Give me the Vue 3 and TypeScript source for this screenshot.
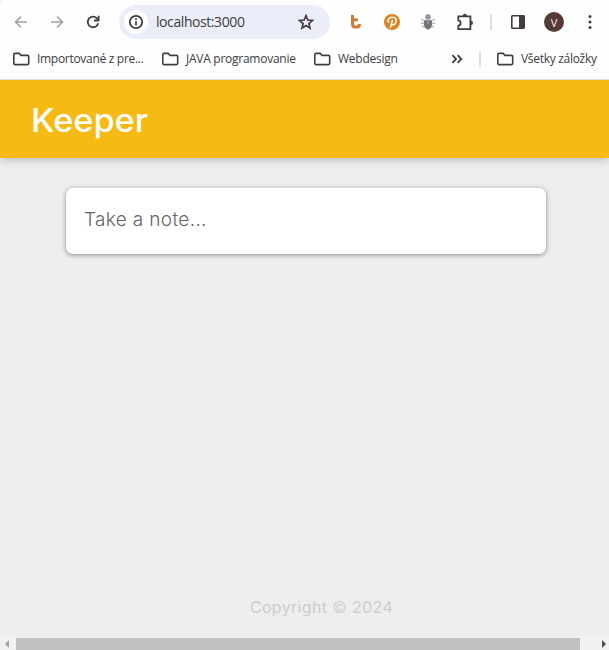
<script setup lang="ts">
import { ref } from 'vue'

const address = ref('localhost:3000')
const bookmarks: { label: string; cls: string }[] = [
  { label: 'Importované z pre...', cls: 'imported' },
  { label: 'JAVA programovanie', cls: 'java' },
  { label: 'Webdesign', cls: 'web' },
]
const note = ref('')
const year = 2024
</script>

<template>
  <div class="window">
    <div class="toolbar">
      <svg class="ic back" viewBox="0 0 16 16"><path d="M14 8H3M8 2.5 2.5 8 8 13.5" /></svg>
      <svg class="ic forward" viewBox="0 0 16 16"><path d="M2 8h11M8 2.5 13.5 8 8 13.5" /></svg>
      <svg class="ic reload" viewBox="0 0 16 16">
        <path d="M13.2 9.2A5.3 5.3 0 1 1 11.9 4.3L13.4 6" /><path d="M13.6 1.8v4.7H9" />
      </svg>
      <div class="omnibox">
        <span class="site-info">
          <svg viewBox="0 0 16 16"><circle cx="8" cy="8" r="6.2" /><path d="M8 7.2v4M8 4.3v1.7" /></svg>
        </span>
        <span class="address">{{ address }}</span>
        <svg class="star" viewBox="0 0 18 18"><path d="m9 2.7 1.8 4.3 4.7.4-3.6 3.1 1.1 4.6L9 12.6l-4 2.5 1.1-4.6-3.6-3.1 4.7-.4z" /></svg>
      </div>
      <svg class="ext tee" viewBox="0 0 16 16"><path d="M5.5 1v9c0 2.2.8 3 2.7 3h1.4c1.9 0 2.9-.9 2.9-3M4 5.8h6.8" /></svg>
      <svg class="ext pin" viewBox="0 0 16 16">
        <circle cx="8" cy="8" r="8" /><path d="M4.8 8.7C3 5.8 5 3.2 8.3 3.2c3 0 4.4 2 3.8 4.6-.7 3.1-3.7 3.9-4.6 2M8.6 5.8 6.3 14" />
      </svg>
      <svg class="ext bug" viewBox="0 0 16 16">
        <path class="legs" d="M4.5 6.5 1 5.3M11.5 6.5 15 5.3M4 9.2H.8M12 9.2h3.2M4.5 11.5 1.8 13.5M11.5 11.5l2.7 2" />
        <circle cx="8" cy="3" r="2.7" /><path class="shell" d="M4 6.2h8v4.6a4 4.6 0 0 1-8 0z" />
        <path class="shine" d="M5.5 5h5M8 7.2v2.6M6.6 2.2h2.8" />
      </svg>
      <svg class="puzzle" viewBox="0 0 18 18">
        <path d="M2.3 3.4h12.1v12.8H2.3v-3.5c3.1-.4 3.1-5 0-5.4z" />
        <path class="tab" d="M7 3.2a1.8 2.2 0 0 1 3.6 0zM14.6 8a2.2 1.9 0 0 1 0 3.8z" />
      </svg>
      <span class="divider top"></span>
      <svg class="panel" viewBox="0 0 16 16"><rect x="1.8" y="1.8" width="12.4" height="12.4" rx=".7" /><path d="M9 1.5h5.5v13H9z" /></svg>
      <span class="avatar">V</span>
      <svg class="dots" viewBox="0 0 4 16"><circle cx="2" cy="2.5" r="1.5" /><circle cx="2" cy="8" r="1.5" /><circle cx="2" cy="13.5" r="1.5" /></svg>
    </div>
    <div class="bookmarks">
      <span v-for="b in bookmarks" :key="b.label" class="bookmark" :class="b.cls">
        <svg class="folder" viewBox="0 0 17 14"><path d="M2 1.4h4.3l1.7 2h6.5c.7 0 1.2.4 1.2 1v7.2c0 .6-.5 1-1.2 1H2c-.7 0-1.2-.4-1.2-1V2.4c0-.6.5-1 1.2-1z" /></svg>
        <span class="label">{{ b.label }}</span>
      </span>
      <svg class="more" viewBox="0 0 12 10"><path d="m1.4 1.2 3.7 3.8-3.7 3.8M6.6 1.2 10.3 5 6.6 8.8" /></svg>
      <span class="divider"></span>
      <span class="bookmark all">
        <svg class="folder" viewBox="0 0 17 14"><path d="M2 1.4h4.3l1.7 2h6.5c.7 0 1.2.4 1.2 1v7.2c0 .6-.5 1-1.2 1H2c-.7 0-1.2-.4-1.2-1V2.4c0-.6.5-1 1.2-1z" /></svg>
        <span class="label">Všetky záložky</span>
      </span>
    </div>
    <header class="app-header"><h1>Keeper</h1></header>
    <main class="content">
      <form class="note-form" @submit.prevent>
        <input v-model="note" class="note-input" placeholder="Take a note..." />
      </form>
    </main>
    <footer class="app-footer"><p>Copyright <span class="mark">©</span> {{ year }}</p></footer>
    <div class="scrollbar">
      <svg class="arrow left" viewBox="0 0 4 8"><path d="M4 0v8L0 4z" /></svg>
      <span class="thumb"></span>
      <svg class="arrow right" viewBox="0 0 4 8"><path d="M0 0v8l4-4z" /></svg>
    </div>
  </div>
</template>

<style>
body { margin: 0; overflow: hidden; }
</style>

<style scoped>
* { box-sizing: border-box; }
.window {
  width: 609px; height: 650px; overflow: hidden; display: flex; flex-direction: column;
  background: #eee; font-family: "Open Sans", "Noto Sans", sans-serif; color: #403c40;
}
svg { display: block; flex: none; fill: none; stroke: #443c40; stroke-width: 1.8; }
.toolbar { display: flex; align-items: center; height: 44px; flex: none; background: #fefefe; padding-left: 13px; border-top-left-radius: 4px; }
.ic { width: 16px; height: 16px; }
.back, .forward { stroke: #a3a0a3; stroke-width: 1.6; }
.forward { margin-left: 20px; }
.reload { margin-left: 20px; }
.omnibox { display: flex; align-items: center; width: 211px; height: 34px; margin-left: 18px; padding-left: 5px; border-radius: 17px; background: #ebeef8; }
.site-info { display: flex; align-items: center; justify-content: center; width: 24px; height: 24px; border-radius: 50%; background: #fff; }
.site-info svg { width: 16px; height: 16px; }
.address { width: 141px; margin-left: 8px; font-size: 14px; letter-spacing: -0.42px; line-height: 20px; }
.star { width: 18px; height: 18px; stroke-width: 1.7; }
.ext { width: 16px; height: 16px; }
.tee { margin-left: 17px; stroke: #d17c32; stroke-width: 3; }
.pin { margin-left: 21px; stroke: #fff; stroke-width: 1.5; }
.pin circle { fill: #db8424; stroke: none; }
.bug { margin-left: 20px; stroke: none; fill: #8b888e; }
.bug .legs { stroke: #9c999d; stroke-width: 1; }
.bug .shell { fill: #77727c; }
.bug .shine { stroke: #b7b5ba; stroke-width: 1; }
.puzzle { width: 18px; height: 18px; margin-left: 20px; }
.puzzle .tab { fill: #443c40; stroke-width: .6; }
.divider { width: 2px; height: 16px; background: #d5e3f0; }
.divider.top { margin-left: 16px; }
.panel { width: 16px; height: 16px; margin-left: 18px; stroke-width: 1.6; }
.panel path { fill: #443c40; stroke: none; }
.avatar { display: flex; align-items: center; justify-content: center; width: 20px; height: 20px; margin-left: 18px; border-radius: 50%; background: #563a38; color: #f4eeee; font-size: 11px; }
.dots { width: 4px; height: 16px; margin-left: 24px; fill: #443c40; stroke: none; }
.bookmarks { position: relative; z-index: 2; display: flex; align-items: center; height: 36px; flex: none; padding: 0 0 6px 12.5px; background: #fefefe; border-bottom: 1px solid #dcdfe2; }
.bookmark { display: flex; align-items: center; gap: 7.5px; flex: none; }
.folder { width: 17px; height: 14px; stroke-width: 1.6; }
.label { font-size: 12px; line-height: 16px; letter-spacing: -0.3px; white-space: nowrap; }
.imported { width: 149px; }
.java { width: 152px; }
.java .label, .web .label { letter-spacing: -0.26px; }
.web { width: 137.5px; }
.more { width: 12px; height: 10px; }
.bookmarks .divider { margin-left: 16px; }
.all { margin-left: 15.5px; }
.app-header { height: 78px; flex: none; padding: 21px 32px 0 31px; background: #f5ba13; box-shadow: 0 0 10px rgba(0, 0, 0, .3); z-index: 1; }
h1 { margin: 0; color: #fff; font: 500 32px/40px Inter, sans-serif; letter-spacing: 0; transform: scaleX(1.07); transform-origin: left; }
.content { flex: 1; padding: 30px 0 0 66px; }
.note-form { width: 480px; height: 66px; border-radius: 7px; background: #fff; box-shadow: 0 1px 5px rgb(138, 137, 137); }
.note-input { width: 100%; height: 63px; padding: 0 18px; border: 0; outline: 0; background: transparent; font: 300 19px/24px Inter, sans-serif; letter-spacing: .35px; color: #555; }
.note-input::placeholder { color: #666; opacity: 1; }
.app-footer { height: 40px; flex: none; padding-left: 34px; text-align: center; }
.app-footer p { margin: 0; color: #ccc; font: 400 16px/22px Inter, sans-serif; letter-spacing: .34px; }
.mark { font-weight: 300; }
.scrollbar { display: flex; align-items: center; height: 14px; flex: none; padding: 2px 0 0 5px; background: #f1f1f1; }
.arrow { width: 4px; height: 8px; stroke: none; fill: #a3a3a3; }
.thumb { width: 564px; height: 12px; margin-left: 7px; background: #c1c1c1; }
.arrow.right { margin-left: 22px; fill: #4f474b; }
</style>
